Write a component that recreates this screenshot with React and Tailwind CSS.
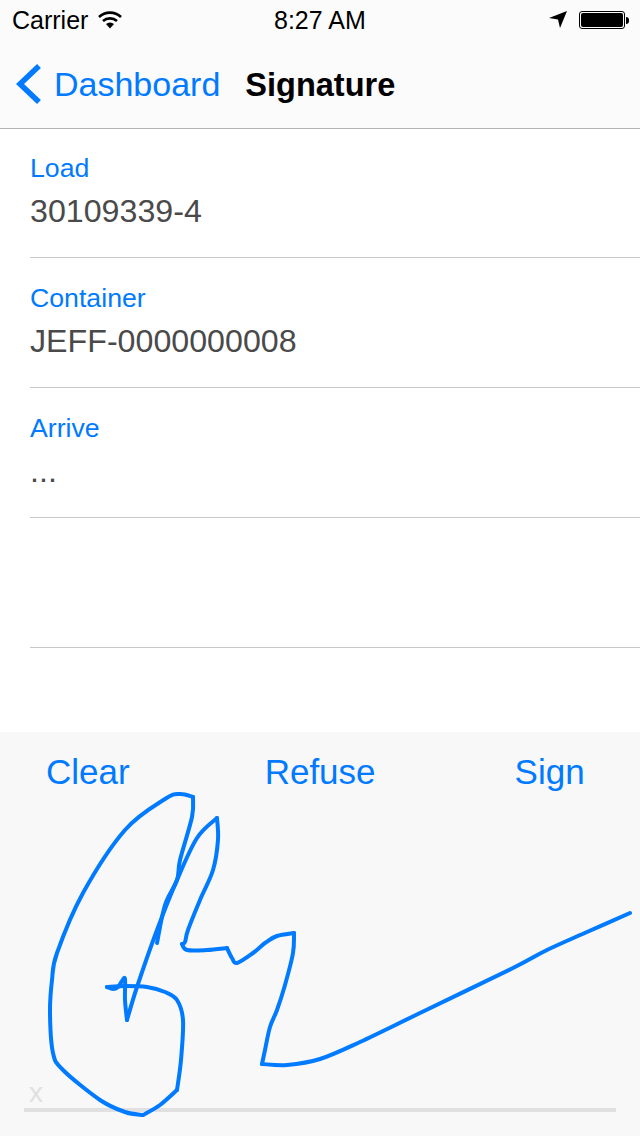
import React from 'react';

const fields = [
    { label: 'Load', value: '30109339-4' },
    { label: 'Container', value: 'JEFF-0000000008' },
    { label: 'Arrive', value: '...' },
    { label: '', value: '' }
];

// signature strokes, split where the pen makes a sharp corner
const strokes = [
    [[107, 987], [113, 989], [118, 987], [122, 981], [125, 979], [125, 1000], [127, 1020]],
    [[127, 1020], [137, 987], [157, 930], [177, 880], [197, 838], [217, 818]],
    [[217, 818], [218, 840], [213, 870], [200, 900], [188, 930], [185, 942], [182, 944]],
    [[182, 944], [187, 950], [207, 950], [227, 948]],
    [[227, 948], [232, 958], [237, 963], [253, 953], [265, 943], [277, 936], [294, 933]],
    [[294, 933], [293, 953], [285, 985], [277, 1010], [270, 1027], [265, 1050], [262, 1064]],
    [[262, 1064], [287, 1065], [320, 1059], [360, 1042], [420, 1013], [513, 968], [547, 950], [587, 932], [630, 913]],
    [[157, 943], [165, 905], [177, 880], [180, 860], [192, 817], [193, 797]],
    [[193, 797], [180, 794], [165, 799], [125, 830], [83, 893], [57, 953], [52, 980], [50, 1013], [53, 1053], [63, 1070], [100, 1100], [125, 1112], [143, 1115]],
    [[143, 1115], [160, 1105], [177, 1090]],
    [[177, 1090], [181, 1060], [183, 1020], [177, 1000], [165, 992], [147, 987], [125, 986], [107, 987]]
];

const toPath = pts => {
    let d = `M${pts[0][0]} ${pts[0][1]}`;
    for (let i = 0; i < pts.length - 1; i++) {
        const p0 = pts[i - 1] || pts[i];
        const p1 = pts[i];
        const p2 = pts[i + 1];
        const p3 = pts[i + 2] || p2;
        const c1x = p1[0] + (p2[0] - p0[0]) / 6;
        const c1y = p1[1] + (p2[1] - p0[1]) / 6;
        const c2x = p2[0] - (p3[0] - p1[0]) / 6;
        const c2y = p2[1] - (p3[1] - p1[1]) / 6;
        d += ` C${c1x} ${c1y} ${c2x} ${c2y} ${p2[0]} ${p2[1]}`;
    }
    return d;
};

const StatusBar = () => (
    <div className="h-10 flex items-center justify-between pl-3 pr-[11px] text-black">
        <div className="flex items-center">
            <span className="text-[25px] leading-none">Carrier</span>
            <svg className="ml-[10px] w-6 h-[18px]" viewBox="0 0 24 18">
                <path d="M1 6 A16 16 0 0 1 23 6" fill="none" stroke="#000" strokeWidth="2.6" />
                <path d="M5 10 A10.5 10.5 0 0 1 19 10" fill="none" stroke="#000" strokeWidth="2.6" />
                <path d="M12 17.5 L8 13 A6 6 0 0 1 16 13 Z" fill="#000" />
            </svg>
        </div>
        <span className="absolute left-[274px] text-[25px] leading-none font-medium">8:27 AM</span>
        <div className="flex items-center">
            <svg className="w-[18px] h-[18px]" viewBox="0 0 18 18">
                <path d="M18 0 L0 7 L9 8.5 L11 17 Z" fill="#000" />
            </svg>
            <div className="ml-3 w-[46px] h-[18px] border border-black rounded-[3px] p-[1px]">
                <div className="w-full h-full bg-black rounded-[2px]" />
            </div>
            <div className="ml-[1px] w-[3px] h-[7px] bg-black rounded-r-sm" />
        </div>
    </div>
);

const NavBar = () => (
    <div className="h-[89px] border-b border-[#b2b2b2] flex items-center">
        <svg className="ml-[16px] w-[26px] h-[40px]" viewBox="0 0 26 40">
            <path d="M23 2 L4 20 L23 38" fill="none" stroke="#007aff" strokeWidth="5.5" />
        </svg>
        <span className="ml-[12px] text-[34px] leading-none text-[#007aff]">Dashboard</span>
        <span className="ml-[25px] mt-[2px] text-[32.5px] leading-none font-bold text-black">Signature</span>
    </div>
);

const Field = ({ label, value }) => (
    <div className="h-[130px] ml-[30px] border-b border-[#c8c7cc] pt-[23px] first:h-[129px] first:pt-[22px]">
        <div className="text-[26.7px] leading-[34px] text-[#007aff]">{label}</div>
        <div className="text-[32.2px] leading-[44px] mt-[4px] text-[#4a4a4a]">{value}</div>
    </div>
);

const SignaturePad = () => (
    <div className="relative h-[404px] bg-[#f8f8f8] overflow-hidden">
        <div className="flex pt-[17px] text-[35px] leading-[46px] text-[#007aff]">
            <span className="ml-[46px]">Clear</span>
            <span className="ml-[135px]">Refuse</span>
            <span className="ml-[139px]">Sign</span>
        </div>
        <div className="absolute left-[29px] top-[345px] text-[28px] leading-[32px] text-[#e0e0e0]">x</div>
        <div className="absolute left-6 right-6 top-[376px] h-1 bg-[#e0e0e0]" />
        <svg className="absolute inset-0 w-[640px] h-[404px]" viewBox="0 732 640 404">
            {strokes.map((s, i) => (
                <path key={i} d={toPath(s)} fill="none" stroke="#007aff" strokeWidth="4" strokeLinecap="round" strokeLinejoin="round" />
            ))}
        </svg>
    </div>
);

const App = () => {
    return (
        <div className="relative w-[640px] h-[1136px] bg-white overflow-hidden font-['Liberation_Sans',Arial,sans-serif]">
            <div className="bg-[#fbfbfb]">
                <StatusBar />
                <NavBar />
            </div>
            <div>
                {fields.map((f, i) => (
                    <Field key={i} label={f.label} value={f.value} />
                ))}
            </div>
            <div className="h-[84px]" />
            <SignaturePad />
        </div>
    );
};

export default App;
